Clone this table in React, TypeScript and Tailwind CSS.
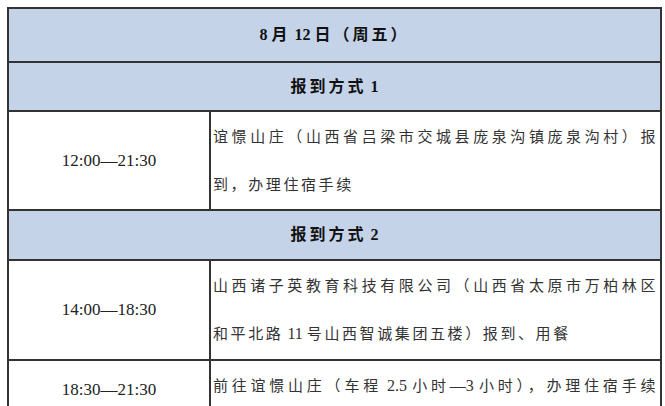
const font = { fontFamily: '"Liberation Serif", "Noto Sans CJK SC", serif' };

const N = ({ children }: { children: React.ReactNode }) => (
  <span className="tracking-normal text-[16px]">{children}</span>
);

const HeaderRow = ({ children, h }: { children: React.ReactNode; h: string }) => (
  <div className={`flex items-center justify-center bg-[#c5d3e9] border-t-2 border-[#333] ${h}`}>
    <span className="text-[16px] font-bold tracking-[3px] text-[#111]">{children}</span>
  </div>
);

const Line = ({ children, full }: { children: React.ReactNode; full?: boolean }) => (
  <div
    className={`h-[48px] leading-[48px] whitespace-nowrap ${
      full ? "text-justify [text-align-last:justify]" : "text-left"
    }`}
  >
    {children}
  </div>
);

const BodyRow = ({ time, lines, h }: { time: string; lines: React.ReactNode[]; h: string }) => (
  <div className={`flex border-t-2 border-[#333] ${h}`}>
    <div className="w-[200px] shrink-0 flex items-center justify-center text-[17px] text-[#222]">
      {time}
    </div>
    <div className="flex-1 border-l-2 border-[#333] pl-[2px] pr-[2px] pt-px text-[15px] tracking-[2.6px] text-[#333]">
      {lines.map((l, i) => (
        <Line key={i} full={i < lines.length - 1 || lines.length === 1}>
          {l}
        </Line>
      ))}
    </div>
  </div>
);

export default function App() {
  return (
    <div className="w-[665px] h-[406px] overflow-hidden bg-white pt-[7px] pl-[7px]" style={font}>
      <div className="w-[655px] border-x-2 border-[#333]">
        <HeaderRow h="h-[54px]">
          <span className="tracking-normal">8 </span>月<span className="tracking-normal"> 12 </span>日（周五）
        </HeaderRow>
        <HeaderRow h="h-[49px]">
          报到方式<span className="tracking-normal"> 1</span>
        </HeaderRow>
        <BodyRow
          time="12:00—21:30"
          h="h-[99px]"
          lines={["谊憬山庄（山西省吕梁市交城县庞泉沟镇庞泉沟村）报", "到，办理住宿手续"]}
        />
        <HeaderRow h="h-[50px]">
          报到方式<span className="tracking-normal"> 2</span>
        </HeaderRow>
        <BodyRow
          time="14:00—18:30"
          h="h-[100px]"
          lines={[
            "山西诸子英教育科技有限公司（山西省太原市万柏林区",
            <>
              和平北路<N> 11 </N>号山西智诚集团五楼）报到、用餐
            </>,
          ]}
        />
        <BodyRow
          time="18:30—21:30"
          h="h-[60px]"
          lines={[
            <>
              前往谊憬山庄（车程<N> 2.5 </N>小时<N>—3 </N>小时），办理住宿手续
            </>,
          ]}
        />
      </div>
    </div>
  );
}
